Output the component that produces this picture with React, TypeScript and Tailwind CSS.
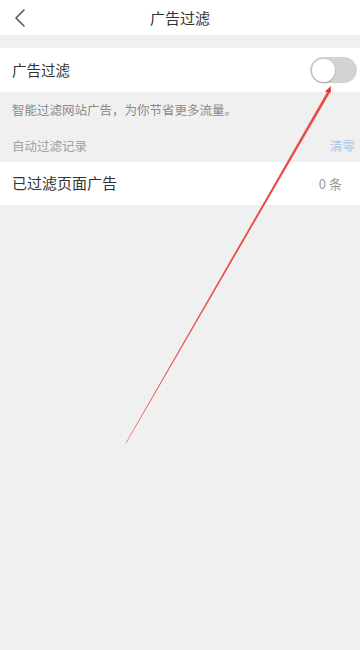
import React, { useState } from 'react';

const font = { fontFamily: '"Noto Sans CJK SC", "Noto Sans", sans-serif' };

export default function App() {
  const [enabled, setEnabled] = useState(false);

  return (
    <div className="relative w-[360px] h-[650px] bg-[#f0f0f0] overflow-hidden" style={font}>
      {/* 顶部导航 */}
      <div className="h-[35px] bg-white flex items-center relative">
        <button className="absolute left-[12px] top-[8px] text-[#555]">
          <svg width="18" height="20" viewBox="0 0 18 20" fill="none">
            <path d="M12 2 L4 10 L12 18" stroke="#555" strokeWidth="1.6" strokeLinecap="round" strokeLinejoin="round" />
          </svg>
        </button>
        <h1 className="flex-1 text-center text-[15px] text-[#333] leading-none">广告过滤</h1>
      </div>

      <div className="h-[13px]" />

      {/* 开关 */}
      <div className="h-[44px] bg-white flex items-center justify-between pl-[12px] pr-[3px]">
        <span className="text-[14.5px] text-[#333]">广告过滤</span>
        <button
          onClick={() => setEnabled(!enabled)}
          className={`w-[47px] h-[26px] rounded-full flex items-center p-[1px] border ${enabled ? 'bg-[#4cd964] border-[#4cd964] justify-end' : 'bg-[#d3d3d3] border-[#d0d0d0] justify-start'}`}
        >
          <span className="w-[23px] h-[23px] rounded-full bg-white shadow-[0_1px_2px_rgba(0,0,0,0.25)]" />
        </button>
      </div>

      <div className="px-[12px] pt-[9px] h-[38px] text-[12.5px] text-[#8a8a8a]">智能过滤网站广告，为你节省更多流量。</div>

      <div className="flex items-center justify-between pl-[12px] pr-[5px] h-[32px] text-[12.5px]">
        <span className="text-[#a0a0a0]">自动过滤记录</span>
        <span className="text-[#a9c9ea]">清零</span>
      </div>

      {/* 记录 */}
      <div className="h-[43px] bg-white flex items-center justify-between pl-[12px] pr-[18px]">
        <span className="text-[15px] text-[#333]">已过滤页面广告</span>
        <span className="text-[13px] text-[#999]">0 条</span>
      </div>

      {/* 标注箭头 */}
      <svg className="absolute left-0 top-0 pointer-events-none" width="360" height="650" viewBox="0 0 360 650">
        <polygon points="125.7,443 126.3,443 331.2,90.5 328.8,89" fill="#e53935" opacity="0.9" />
        <polygon points="331,86 325,91.5 330.5,93" fill="#e53935" />
      </svg>
    </div>
  );
}
